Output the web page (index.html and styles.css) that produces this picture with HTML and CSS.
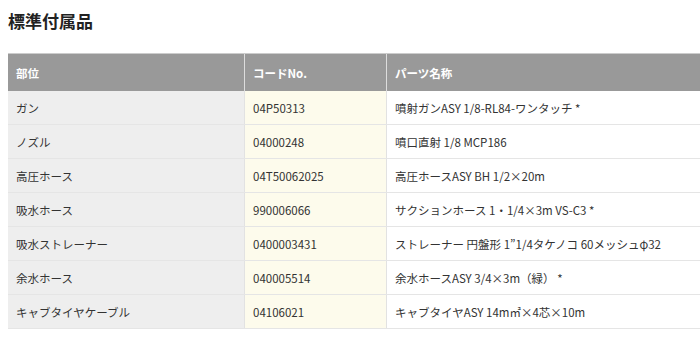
FILE: index.html
```html
<!DOCTYPE html>
<html lang="ja">
<head>
<meta charset="utf-8">
<link rel="stylesheet" href="styles.css">
</head>
<body>
<h2 class="title">標準付属品</h2>
<table class="parts">
  <thead>
    <tr><th class="c1">部位</th><th class="c2">コードNo.</th><th class="c3">パーツ名称</th></tr>
  </thead>
  <tbody>
    <tr><td class="c1">ガン</td><td class="c2">04P50313</td><td class="c3">噴射ガンASY 1/8-RL84-ワンタッチ *</td></tr>
    <tr><td class="c1">ノズル</td><td class="c2">04000248</td><td class="c3">噴口直射 1/8 MCP186</td></tr>
    <tr><td class="c1">高圧ホース</td><td class="c2">04T50062025</td><td class="c3">高圧ホースASY BH 1/2×20m</td></tr>
    <tr><td class="c1">吸水ホース</td><td class="c2">990006066</td><td class="c3">サクションホース 1・1/4×3m VS-C3 *</td></tr>
    <tr><td class="c1">吸水ストレーナー</td><td class="c2">0400003431</td><td class="c3">ストレーナー 円盤形 1”1/4タケノコ 60メッシュφ32</td></tr>
    <tr><td class="c1">余水ホース</td><td class="c2">040005514</td><td class="c3">余水ホースASY 3/4×3m（緑） *</td></tr>
    <tr><td class="c1">キャブタイヤケーブル</td><td class="c2">04106021</td><td class="c3">キャブタイヤASY 14m㎡×4芯×10m</td></tr>
  </tbody>
</table>
</body>
</html>
```
FILE: styles.css
```css
html, body {
  margin: 0;
  padding: 0;
  background: #fff;
}
body {
  padding: 0 0 0 8px;
  font-family: "Noto Sans CJK JP", "Noto Sans", sans-serif;
  color: #333;
  width: 700px;
  box-sizing: border-box;
}
.title {
  margin: 0;
  padding-top: 9px;
  font-size: 17px;
  line-height: 24px;
  font-weight: bold;
  color: #222;
}
.parts {
  margin-top: 20px;
  border-collapse: collapse;
  table-layout: fixed;
  width: 692px;
  font-size: 11.5px;
}
.parts th, .parts td {
  text-align: left;
  padding: 0 8px;
  white-space: nowrap;
  overflow: hidden;
}
.parts th {
  height: 37px;
  background: #999;
  color: #fff;
  font-weight: bold;
  border-top: 1px solid #ccc;
  border-left: 1px solid #ddd;
}
.parts th:first-child { border-left: none; }
.parts td {
  height: 33px;
  border-bottom: 1px solid #e5e5e5;
  border-left: 1px solid #e2e2e2;
}
.parts td:first-child { border-left: none; }
.c1 { width: 220px; }
.c2 { width: 125px; }
td.c1 { background: #eeeeee; }
td.c2 { background: #fdfbec; }
td.c3 { background: #fff; }
```
